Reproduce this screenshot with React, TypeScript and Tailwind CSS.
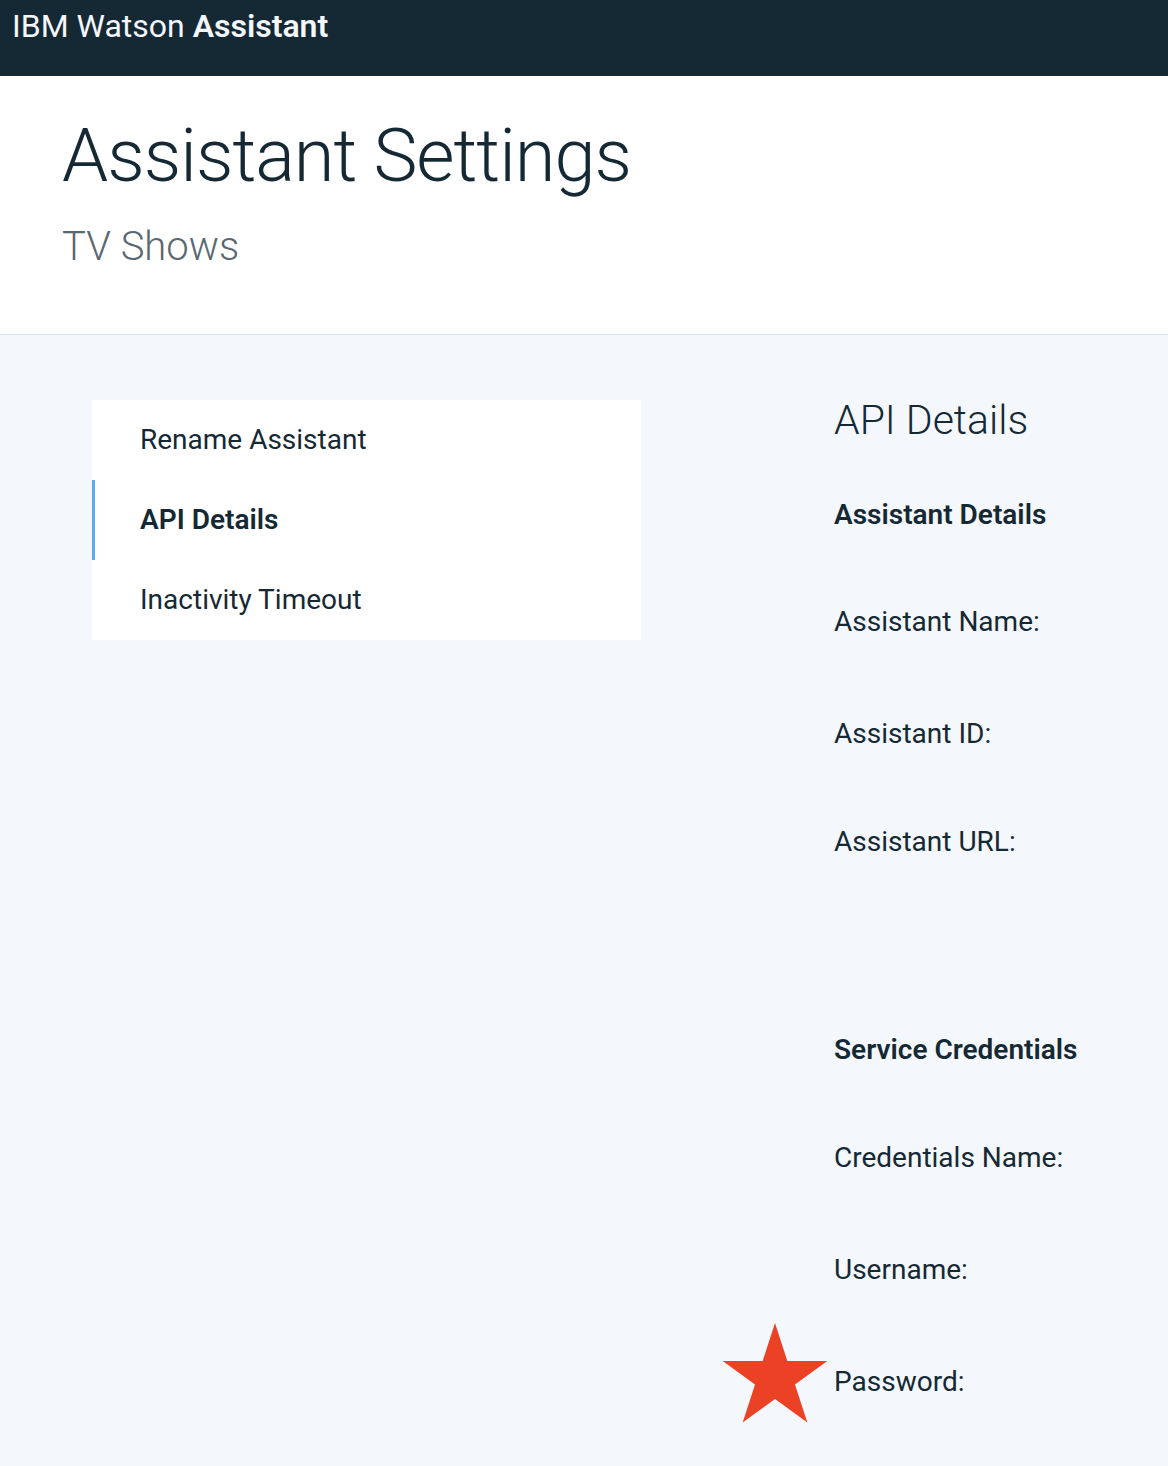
import React from 'react';

const font = { fontFamily: 'Roboto, "Noto Sans", Arial, sans-serif' };

const navItems = [
  { label: 'Rename Assistant', active: false },
  { label: 'API Details', active: true },
  { label: 'Inactivity Timeout', active: false },
];

const Star: React.FC = () => (
  <svg width="110" height="100" viewBox="0 0 110 100" className="absolute left-[-114px] top-[-45px]">
    <polygon
      fill="#eb4125"
      points="55,0 67.34,38.01 107.31,38 74.97,61.49 87.33,99.5 55,76 22.67,99.5 35.03,61.49 2.69,38 42.66,38.01"
    />
  </svg>
);

const App: React.FC = () => {
  return (
    <div className="min-h-screen bg-[#f4f7fb] text-[#152935]" style={font}>
      <header className="h-[76px] bg-[#152935] px-3 text-[#f4f7fb]">
        <div className="text-[32px] leading-[52px]">
          IBM Watson <span className="font-semibold">Assistant</span>
        </div>
      </header>

      <div className="h-[259px] border-b border-[#dfe3e6] bg-white px-[62px]">
        <h1 className="pt-[38px] text-[74px] font-light leading-[84px] tracking-[-1px]">Assistant Settings</h1>
        <p className="mt-[26px] text-[40px] font-light leading-[46px] text-[#5a6872]">TV Shows</p>
      </div>

      <div className="flex items-start pl-[92px] pt-[65px]">
        <nav className="w-[549px] bg-white">
          {navItems.map((item) => (
            <div
              key={item.label}
              className={`flex h-[80px] items-center border-l-[3px] pl-[45px] text-[28px] ${
                item.active ? 'border-[#5aaafa] font-semibold' : 'border-transparent'
              }`}
            >
              {item.label}
            </div>
          ))}
        </nav>

        <div className="ml-[193px] flex flex-col">
          <h2 className="text-[41px] font-light leading-[40px]">API Details</h2>
          <h3 className="mt-[61px] text-[28px] font-semibold leading-[28px]">Assistant Details</h3>
          <div className="mt-[79px] text-[28px] leading-[28px]">Assistant Name:</div>
          <div className="mt-[84px] text-[28px] leading-[28px]">Assistant ID:</div>
          <div className="mt-[80px] text-[28px] leading-[28px]">Assistant URL:</div>
          <h3 className="mt-[180px] text-[28px] font-semibold leading-[28px]">Service Credentials</h3>
          <div className="mt-[80px] text-[28px] leading-[28px]">Credentials Name:</div>
          <div className="mt-[84px] text-[28px] leading-[28px]">Username:</div>
          <div className="relative mt-[84px] text-[28px] leading-[28px]">
            <Star />
            Password:
          </div>
        </div>
      </div>
    </div>
  );
};

export default App;
